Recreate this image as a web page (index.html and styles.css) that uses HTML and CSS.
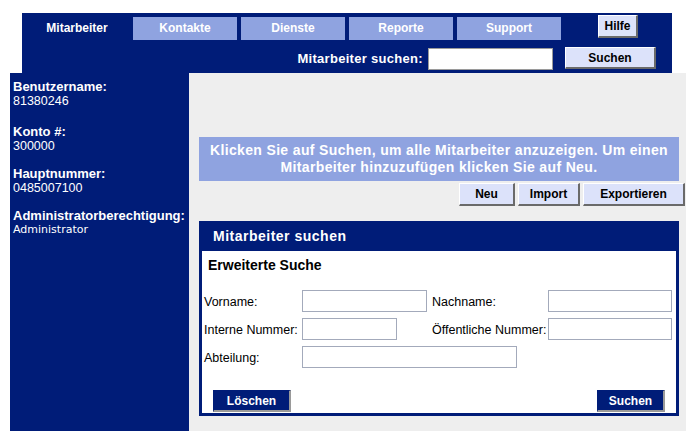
FILE: index.html
```html
<!DOCTYPE html>
<html lang="de">
<head>
<meta charset="utf-8">
<title>Mitarbeiter</title>
<link rel="stylesheet" href="styles.css">
</head>
<body>
<header class="topbar">
  <div class="tabs-row">
    <nav class="tabs">
      <a class="tab active">Mitarbeiter</a>
      <a class="tab">Kontakte</a>
      <a class="tab">Dienste</a>
      <a class="tab">Reporte</a>
      <a class="tab">Support</a>
    </nav>
    <button class="btn light help">Hilfe</button>
  </div>
  <div class="search-row">
    <label class="search-label">Mitarbeiter suchen:</label>
    <input class="search-input" type="text">
    <button class="btn light search-btn">Suchen</button>
  </div>
</header>
<div class="main">
  <aside class="sidebar">
    <dl class="info">
      <dt>Benutzername:</dt><dd class="first">81380246</dd>
      <dt>Konto #:</dt><dd>300000</dd>
      <dt>Hauptnummer:</dt><dd>0485007100</dd>
      <dt>Administratorberechtigung:</dt><dd class="role">Administrator</dd>
    </dl>
  </aside>
  <section class="content">
    <div class="banner">Klicken Sie auf Suchen, um alle Mitarbeiter anzuzeigen. Um einen Mitarbeiter hinzuzufügen klicken Sie auf Neu.</div>
    <div class="actions">
      <button class="btn light act-neu">Neu</button>
      <button class="btn light act-import">Import</button>
      <button class="btn light act-export">Exportieren</button>
    </div>
    <div class="panel">
      <div class="panel-title">Mitarbeiter suchen</div>
      <div class="panel-body">
        <div class="panel-sub">Erweiterte Suche</div>
        <div class="form-grid">
          <label>Vorname:</label><input class="field w125" type="text">
          <label>Nachname:</label><input class="field w124" type="text">
          <label>Interne Nummer:</label><input class="field w95" type="text">
          <label>Öffentliche Nummer:</label><input class="field w124" type="text">
          <label>Abteilung:</label><input class="field w215 span2" type="text">
        </div>
        <div class="form-actions">
          <button class="btn dark btn-clear">Löschen</button>
          <button class="btn dark btn-find">Suchen</button>
        </div>
      </div>
    </div>
  </section>
</div>
</body>
</html>
```
FILE: styles.css
```css
html, body {
  margin: 0;
  padding: 0;
  background: #ffffff;
  font-family: "Liberation Sans", Arial, sans-serif;
}

.topbar {
  margin: 13px 0 0 22px;
  width: 650px;
  height: 60px;
  background: #001c78;
  box-sizing: border-box;
}

.tabs-row {
  display: flex;
  align-items: flex-start;
}

.tabs {
  display: flex;
  gap: 4px;
  margin: 4px 0 0 3px;
}

.tab {
  width: 104px;
  height: 23px;
  line-height: 23px;
  text-align: center;
  background: #8fa3e0;
  color: #ffffff;
  font-weight: bold;
  font-size: 12px;
}

.tab.active {
  background: #001c78;
}

.btn {
  box-sizing: border-box;
  margin: 0;
  padding: 0;
  font-family: "Liberation Sans", Arial, sans-serif;
  font-weight: bold;
  font-size: 12px;
  cursor: pointer;
}

.btn.light {
  background: #dce2fa;
  color: #000000;
  border-top: 1px solid #ffffff;
  border-left: 1px solid #ffffff;
  border-right: 2px solid #6a6a6a;
  border-bottom: 2px solid #6a6a6a;
}

.btn.dark {
  background: #001c78;
  color: #ffffff;
  border-top: 1px solid #001c78;
  border-left: 1px solid #001c78;
  border-right: 2px solid #9a9a9a;
  border-bottom: 2px solid #9a9a9a;
  height: 22px;
}

.help {
  width: 40px;
  height: 23px;
  margin: 2px 0 0 37px;
}

.search-row {
  display: flex;
  align-items: flex-start;
  margin-top: 7px;
}

.search-label {
  width: 401px;
  text-align: right;
  color: #ffffff;
  font-weight: bold;
  font-size: 13px;
  letter-spacing: 0.3px;
  line-height: 23px;
}

.search-input {
  box-sizing: border-box;
  width: 125px;
  height: 22px;
  margin: 1px 0 0 5px;
  border: 1px solid #9a9a9a;
  background: #ffffff;
}

.search-btn {
  width: 91px;
  height: 22px;
  margin-left: 12px;
}

.main {
  display: flex;
  min-height: calc(100vh - 73px);
}

.sidebar {
  width: 179px;
  margin-left: 10px;
  background: #001c78;
  color: #ffffff;
  box-sizing: border-box;
  padding: 6px 0 0 3px;
}

.info {
  margin: 0;
}

.info dt {
  font-weight: bold;
  font-size: 13px;
  line-height: 15px;
}

.info dd {
  margin: 0 0 13px 0;
  font-size: 12.5px;
  line-height: 14px;
}

.info dd.first {
  margin-bottom: 16px;
}

.info dd.role {
  font-family: "DejaVu Sans", Verdana, sans-serif;
  font-size: 11px;
}

.content {
  flex: 1;
  background: #eeeeee;
  padding: 64px 1px 0 10px;
}

.banner {
  margin-right: 6px;
  background: #8fa3e0;
  color: #ffffff;
  font-weight: bold;
  font-size: 14px;
  letter-spacing: 0.35px;
  line-height: 17px;
  text-align: center;
  padding: 5px 2px;
}

.actions {
  display: flex;
  justify-content: flex-end;
  gap: 3px;
  margin-top: 2px;
}

.actions .btn {
  height: 23px;
}

.act-neu { width: 56px; }
.act-import { width: 62px; }
.act-export { width: 102px; }

.panel {
  margin: 15px 6px 0 0;
  background: #001c78;
  padding: 0 3px 3px 3px;
}

.panel-title {
  height: 30px;
  line-height: 31px;
  color: #ffffff;
  font-weight: bold;
  font-size: 14px;
  letter-spacing: 0.5px;
  padding-left: 11px;
}

.panel-body {
  background: #ffffff;
  padding: 6px 0 1px 2px;
}

.panel-sub {
  font-weight: bold;
  font-size: 14px;
  line-height: 16px;
  padding-left: 4px;
}

.form-grid {
  display: grid;
  grid-template-columns: 98px 130px 116px 124px;
  grid-auto-rows: 22px;
  row-gap: 6px;
  margin-top: 17px;
}

.form-grid label {
  align-self: center;
  font-size: 12.5px;
  color: #000000;
  white-space: nowrap;
  padding-top: 2px;
}

.field {
  box-sizing: border-box;
  height: 22px;
  margin: 0;
  padding: 0;
  border: 1px solid #a3aabb;
  background: #ffffff;
}

.w125 { width: 125px; }
.w124 { width: 124px; }
.w95 { width: 95px; }
.w215 { width: 215px; }
.span2 { grid-column: span 2; }

.form-actions {
  display: flex;
  justify-content: space-between;
  margin-top: 22px;
  padding: 0 11px 0 9px;
}

.btn-clear { width: 78px; }
.btn-find { width: 68px; }
```
